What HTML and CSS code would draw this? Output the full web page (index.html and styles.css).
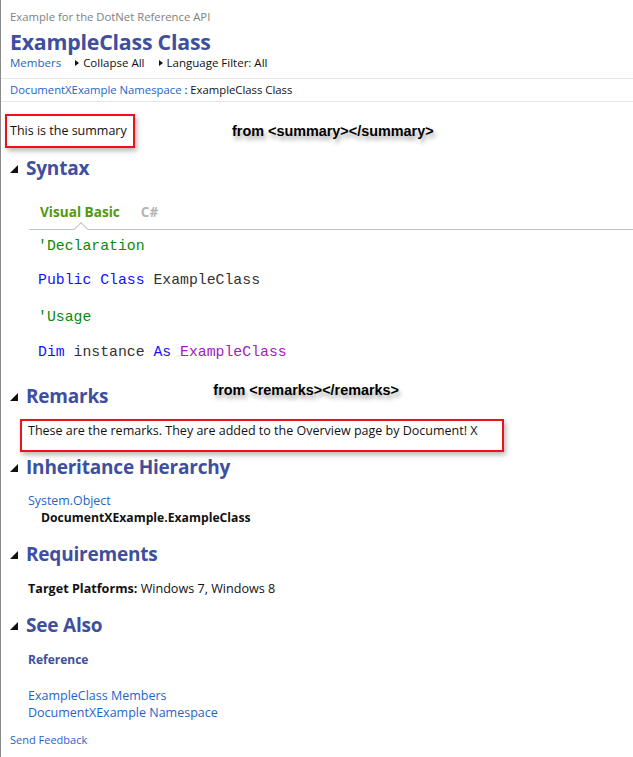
FILE: index.html
```html
<!DOCTYPE html>
<html>
<head>
<meta charset="utf-8">
<link rel="stylesheet" href="styles.css">
</head>
<body>
<div class="page">
  <div class="subtitle">Example for the DotNet Reference API</div>
  <div class="title">ExampleClass Class</div>
  <div class="toolbar">
    <a class="link">Members</a>
    <span class="tool"><span class="caret"></span>Collapse All</span>
    <span class="tool"><span class="caret"></span>Language Filter: All</span>
  </div>
  <div class="crumb"><a class="link">DocumentXExample Namespace</a> : ExampleClass Class</div>

  <div class="summary-row">
    <div class="redbox summary">This is the summary</div>
    <div class="note note-summary">from &lt;summary&gt;&lt;/summary&gt;</div>
  </div>

  <h2 class="heading h-syntax"><svg class="tri" width="8" height="8" viewBox="0 0 8 8"><polygon points="8,0 8,8 0,8"/></svg>Syntax</h2>
  <div class="tabs">
    <span class="tab active">Visual Basic</span>
    <span class="tab">C#</span>
  </div>
  <div class="code">
    <div class="cl cl1"><span class="cm">'Declaration</span></div>
    <div class="cl cl2"><span class="kw">Public</span> <span class="kw">Class</span> ExampleClass</div>
    <div class="cl cl3"><span class="cm">'Usage</span></div>
    <div class="cl cl4"><span class="kw">Dim</span> instance <span class="kw">As</span> <span class="ty">ExampleClass</span></div>
  </div>

  <div class="heading-row">
    <h2 class="heading h-remarks"><svg class="tri" width="8" height="8" viewBox="0 0 8 8"><polygon points="8,0 8,8 0,8"/></svg>Remarks</h2>
    <div class="note note-remarks">from &lt;remarks&gt;&lt;/remarks&gt;</div>
  </div>
  <div class="redbox remarks">These are the remarks. They are added to the Overview page by Document! X</div>

  <h2 class="heading h-inherit"><svg class="tri" width="8" height="8" viewBox="0 0 8 8"><polygon points="8,0 8,8 0,8"/></svg>Inheritance Hierarchy</h2>
  <div class="hier">
    <a class="link">System.Object</a>
    <div class="hier-sub">DocumentXExample.ExampleClass</div>
  </div>

  <h2 class="heading h-req"><svg class="tri" width="8" height="8" viewBox="0 0 8 8"><polygon points="8,0 8,8 0,8"/></svg>Requirements</h2>
  <div class="req"><b>Target Platforms:</b> Windows 7, Windows 8</div>

  <h2 class="heading h-see"><svg class="tri" width="8" height="8" viewBox="0 0 8 8"><polygon points="8,0 8,8 0,8"/></svg>See Also</h2>
  <div class="ref-title">Reference</div>
  <div class="see-links">
    <a class="link">ExampleClass Members</a>
    <a class="link">DocumentXExample Namespace</a>
  </div>
  <div class="feedback"><a class="link">Send Feedback</a></div>
</div>
</body>
</html>
```
FILE: styles.css
```css
html, body {
  margin: 0;
  padding: 0;
  background: #fff;
}
body {
  font-family: "Open Sans", "Noto Sans", sans-serif;
  font-size: 12px;
  color: #1a1a1a;
}
.page {
  border-left: 1px solid #8a8a8a;
  min-height: 757px;
  box-sizing: border-box;
}
.subtitle, .title, .toolbar, .crumb, .summary-row, .heading, .heading-row, .feedback {
  padding-left: 9px;
}
.link {
  color: #1f64c8;
  text-decoration: none;
}
.subtitle {
  padding-top: 9px;
  line-height: 16px;
  color: #808080;
  font-size: 11.3px;
}
.title {
  margin-top: 5px;
  font-size: 21.3px;
  font-weight: bold;
  line-height: 24px;
  height: 24px;
  color: #3d4f9e;
  letter-spacing: -0.2px;
}
.toolbar {
  margin-top: 1px;
  font-size: 11.5px;
  line-height: 16px;
  height: 16px;
  padding-bottom: 7px;
  border-bottom: 1px solid #e6e6e6;
  display: flex;
}
.toolbar .link {
  margin-right: 14px;
}
.tool {
  display: inline-flex;
  align-items: center;
  margin-right: 14px;
  color: #111;
}
.caret {
  width: 0;
  height: 0;
  border-top: 3.5px solid transparent;
  border-bottom: 3.5px solid transparent;
  border-left: 4px solid #111;
  margin-right: 4px;
}
.crumb {
  padding-top: 3px;
  font-size: 11.3px;
  line-height: 16px;
  padding-bottom: 3px;
  border-bottom: 1px solid #e6e6e6;
  color: #111;
}
.summary-row {
  display: flex;
  align-items: center;
  margin-top: 12px;
}
.redbox {
  border: 2px solid #e8131b;
  box-shadow: 2px 3px 5px rgba(0,0,0,0.28);
  box-sizing: border-box;
  color: #111;
  font-size: 12.5px;
}
.summary {
  margin-left: -5px;
  width: 130px;
  height: 34px;
  padding-left: 3px;
  line-height: 30px;
}
.note {
  font-family: "Liberation Sans", Arial, sans-serif;
  font-weight: bold;
  font-size: 14.4px;
  color: #000;
  text-shadow: 2px 4px 4px rgba(0,0,0,0.35);
}
.note-summary {
  margin-left: 97px;
}
.heading {
  margin: 0;
  display: flex;
  align-items: center;
  font-size: 19px;
  line-height: 24px;
  font-weight: bold;
  color: #3d4f9e;
  letter-spacing: -0.2px;
}
.tri {
  fill: #111;
  margin-right: 8px;
  margin-top: 1px;
}
.h-syntax { margin-top: 8px; }
.tabs {
  margin-top: 23px;
  margin-left: 28px;
  padding-left: 11px;
  line-height: 18px;
  padding-bottom: 8px;
  border-bottom: 1px solid #c4c4c4;
  position: relative;
  display: flex;
  gap: 21px;
}
.tabs::after {
  content: "";
  position: absolute;
  left: 47px;
  bottom: -5px;
  width: 9px;
  height: 9px;
  background: #fff;
  border-left: 1px solid #c4c4c4;
  border-top: 1px solid #c4c4c4;
  transform: rotate(45deg);
}
.tab {
  font-size: 13.6px;
  font-weight: bold;
  color: #b5b5b5;
}
.tab.active {
  color: #4f9a0a;
}
.code {
  padding-left: 37px;
  margin-top: 7px;
  font-family: "Liberation Mono", "Courier New", monospace;
  font-size: 14.8px;
  color: #333;
}
.cl {
  line-height: 18px;
}
.cl2 { margin-top: 16px; }
.cl3 { margin-top: 19px; }
.cl4 { margin-top: 17px; }
.cm { color: #0a8a0a; }
.kw { color: #1010ff; }
.ty { color: #a020c0; }
.heading-row {
  display: flex;
  align-items: center;
  margin-top: 21px;
}
.heading-row .heading {
  padding-left: 0;
}
.note-remarks {
  margin-left: 105px;
  margin-bottom: 12px;
}
.remarks {
  margin-top: 9px;
  margin-left: 19px;
  width: 484px;
  height: 33px;
  padding: 1px 0 0 6px;
  line-height: 18px;
}
.h-inherit { margin-top: 3px; }
.hier {
  margin-top: 13px;
  padding-left: 27px;
  line-height: 17px;
  font-size: 12.4px;
}
.hier .link { display: block; }
.hier-sub {
  padding-left: 13px;
  font-weight: bold;
  color: #111;
  font-size: 12.2px;
}
.h-req { margin-top: 16px; }
.req {
  margin-top: 15px;
  padding-left: 27px;
  line-height: 16px;
  color: #111;
  font-size: 12.6px;
}
.req b { font-weight: bold; }
.h-see { margin-top: 16px; }
.ref-title {
  margin-top: 15px;
  padding-left: 27px;
  line-height: 16px;
  font-weight: bold;
  color: #3d4f9e;
}
.see-links {
  margin-top: 19px;
  padding-left: 27px;
  line-height: 17px;
  font-size: 12.5px;
  display: flex;
  flex-direction: column;
  align-items: flex-start;
}
.feedback {
  margin-top: 11px;
  line-height: 16px;
  font-size: 11px;
}
```
